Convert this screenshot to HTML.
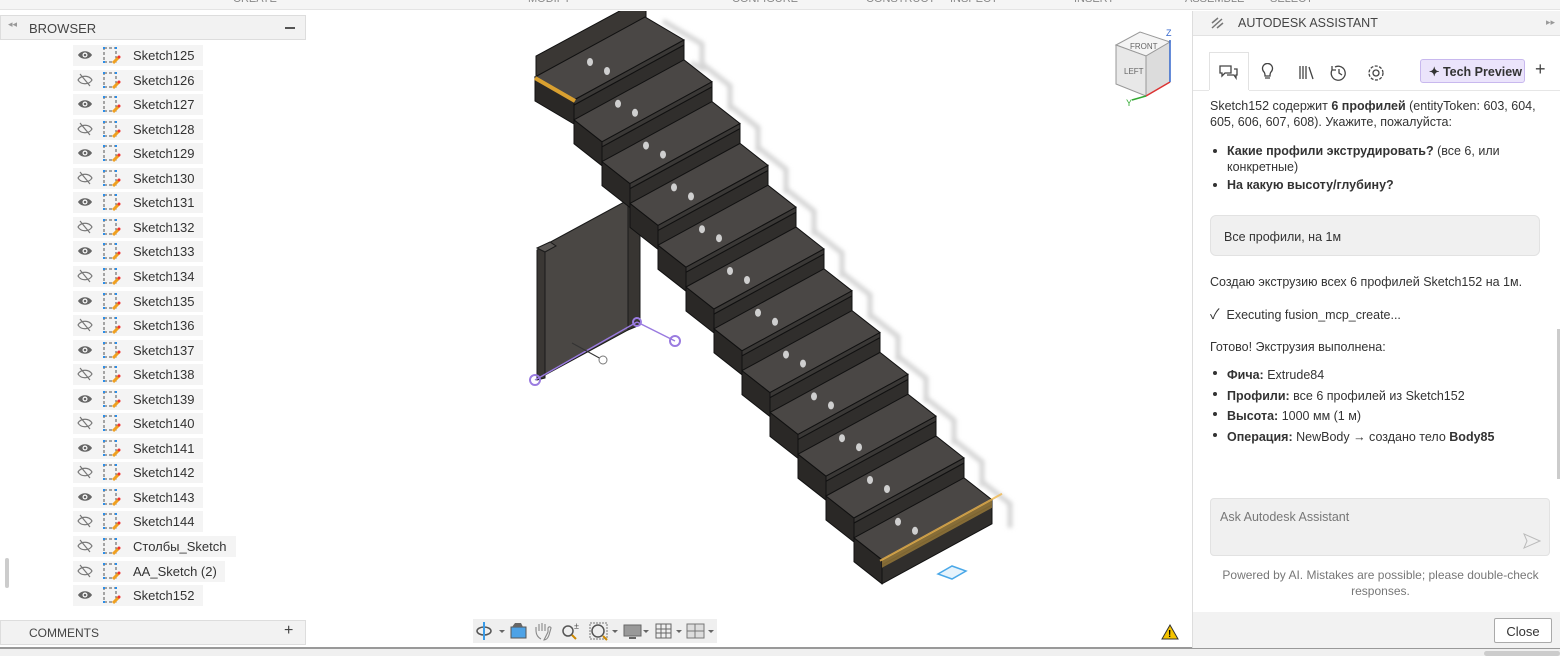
<!DOCTYPE html>
<html><head><meta charset="utf-8"><style>
*{box-sizing:border-box;margin:0;padding:0}
body{width:1560px;height:656px;overflow:hidden;background:#fff;font-family:"Liberation Sans","Noto Sans CJK SC",sans-serif;position:relative;color:#3c3c3c}
.abs{position:absolute}
.top{left:0;top:0;width:1560px;height:10px;background:#f5f5f5;border-bottom:1px solid #e4e4e4;overflow:hidden;font-size:11px;color:#888}
.top span{position:absolute;top:-7px}
.bh{left:0;top:15px;width:306px;height:25px;background:#f2f2f2;border:1px solid #ddd;font-size:13px;color:#444}
.row{position:absolute;left:73px;height:21px;background:#f4f4f4;font-size:13px;color:#333}
.row .t{position:absolute;left:60px;top:3px}
.panel{left:1192px;top:11px;width:368px;height:637px;border-left:1px solid #ddd;background:#fff}
.ph{left:0;top:0;width:368px;height:25px;background:#f3f3f3;border-bottom:1px solid #e2e2e2;font-size:12.5px;color:#444}
.msg{font-size:12.5px;line-height:16px;color:#333}
b{font-weight:bold}
ul{list-style:none}
ul li{position:relative;padding-left:17px}
ul li:before{content:"";position:absolute;left:3px;top:6px;width:4px;height:4px;border-radius:2px;background:#333}
</style></head><body>
<div class="abs top"><span style="left:233px">CREATE</span><span style="left:528px">MODIFY</span><span style="left:732px">CONFIGURE</span><span style="left:866px">CONSTRUCT</span><span style="left:950px">INSPECT</span><span style="left:1074px">INSERT</span><span style="left:1185px">ASSEMBLE</span><span style="left:1270px">SELECT</span></div>
<div class="abs bh"><span class="abs" style="left:7px;top:3px;font-size:9px;color:#999">◂◂</span><span class="abs" style="left:28px;top:5px">BROWSER</span><span class="abs" style="left:284px;top:11px;width:10px;height:2px;background:#555"></span></div>

<div id="rows"></div>

<div class="abs" style="left:0;top:620px;width:306px;height:25px;background:#f2f2f2;border:1px solid #ddd;font-size:12px;color:#444"><span class="abs" style="left:28px;top:5px">COMMENTS</span><span class="abs" style="left:283px;top:1px;font-size:16px">+</span></div>
<div class="abs" style="left:5px;top:558px;width:4px;height:30px;background:#ccc;border-radius:2px"></div>
<div class="abs" style="left:0;top:647px;width:1560px;height:9px;background:#f0f0f0;border-top:2px solid #999"></div>
<div class="abs" style="left:1484px;top:651px;width:76px;height:5px;background:#ccc;border-radius:3px"></div>

<svg class="abs" style="left:306px;top:11px" width="886" height="636" viewBox="306 11 886 636">
<defs><filter id="bl"><feGaussianBlur stdDeviation="2"/></filter></defs>
<g id="shadow" filter="url(#bl)"></g>
<polygon points="545,245 628,200 628,330 545,375" fill="#4a4744" stroke="#1a1a1a"/>
<polygon points="537,250 545,245 545,378 537,380" fill="#3a3734" stroke="#1a1a1a"/>
<polygon points="537,248 550,242 556,246 545,252" fill="#5a5754" stroke="#1a1a1a"/>
<polygon points="628,200 640,198 640,325 628,330" fill="#383532" stroke="#1a1a1a"/>
<g id="stairs"></g>
<line x1="535" y1="380" x2="637" y2="322" stroke="#9a7be0" stroke-width="1.5"/>
<line x1="637" y1="322" x2="675" y2="341" stroke="#9a7be0" stroke-width="1.5"/>
<circle cx="535" cy="380" r="5" fill="none" stroke="#9a7be0" stroke-width="2"/>
<circle cx="637" cy="322" r="4" fill="none" stroke="#9a7be0" stroke-width="2"/>
<circle cx="675" cy="341" r="5" fill="none" stroke="#9a7be0" stroke-width="2"/>
<line x1="572" y1="343" x2="603" y2="360" stroke="#333"/>
<circle cx="603" cy="360" r="4" fill="#fff" stroke="#777"/>
<polygon points="938,574 952,566 966,571 952,579" fill="#e6f3fc" stroke="#4aa8e8" stroke-width="1.5"/>
<polygon points="1116,45 1140,32 1170,42 1146,56" fill="#f4f4f4" stroke="#999"/>
<polygon points="1116,45 1146,56 1146,96 1116,84" fill="#e8e8e8" stroke="#999"/>
<polygon points="1146,56 1170,42 1170,82 1146,96" fill="#dcdcdc" stroke="#999"/>
<text x="1130" y="49" font-size="8" fill="#666" font-family="Liberation Sans">FRONT</text>
<text x="1124" y="74" font-size="8" fill="#666" font-family="Liberation Sans">LEFT</text>
<line x1="1146" y1="96" x2="1170" y2="82" stroke="#d33" stroke-width="1.5"/>
<line x1="1146" y1="96" x2="1132" y2="100" stroke="#3a3" stroke-width="1.5"/>
<line x1="1170" y1="40" x2="1170" y2="82" stroke="#36c" stroke-width="1.5"/>
<text x="1166" y="36" font-size="9" fill="#36c">Z</text><text x="1126" y="106" font-size="9" fill="#3a3">Y</text>
<polygon points="1170,625 1162,639 1178,639" fill="#f5c400" stroke="#333"/>
<text x="1168" y="637" font-size="10" font-weight="bold" fill="#000">!</text>
</svg>

<div class="abs" style="left:473px;top:619px;width:244px;height:24px;background:#efefef"></div>
<svg class="abs" style="left:473px;top:619px" width="244" height="24">
<ellipse cx="11" cy="12" rx="7" ry="4" fill="none" stroke="#555" stroke-width="1.5"/><line x1="11" y1="3" x2="11" y2="21" stroke="#3a9be8" stroke-width="2"/>
<path d="M26 11l3 3 3-3z" fill="#666"/>
<rect x="38" y="8" width="15" height="11" fill="#4da2e6" stroke="#555"/><path d="M39 8l3-4h6l2 4" fill="#666"/>
<path d="M68 20c-4-2-5-6-5-9v-3m3 4v-7m3 7v-8m3 8v-7m3 8v-4c1-2 3-1 3 0l-2 7c-1 3-3 5-5 5z" fill="none" stroke="#888" stroke-width="1.1"/>
<circle cx="95" cy="12" r="5" fill="none" stroke="#555" stroke-width="1.5"/><line x1="99" y1="16" x2="103" y2="20" stroke="#c80" stroke-width="2"/><text x="101" y="10" font-size="9" fill="#555">±</text>
<rect x="117" y="4" width="17" height="16" fill="none" stroke="#777" stroke-dasharray="2,1"/><circle cx="125" cy="12" r="6" fill="none" stroke="#555" stroke-width="1.5"/><line x1="130" y1="17" x2="134" y2="21" stroke="#c80" stroke-width="2"/>
<path d="M139 11l3 3 3-3z" fill="#666"/>
<rect x="151" y="6" width="17" height="11" fill="#999" stroke="#666"/><rect x="156" y="18" width="7" height="2" fill="#666"/><path d="M170 11l3 3 3-3z" fill="#666"/>
<g stroke="#666" fill="none"><rect x="183" y="5" width="15" height="14"/><path d="M188 5v14M193 5v14M183 10h15M183 14h15"/></g><path d="M203 11l3 3 3-3z" fill="#666"/>
<g stroke="#777" fill="#ddd"><rect x="214" y="5" width="17" height="14"/><path d="M222 5v14M214 12h17" fill="none"/></g><path d="M235 11l3 3 3-3z" fill="#666"/>
</svg>

<div class="abs panel">
 <div class="abs ph"><svg class="abs" style="left:18px;top:6px" width="18" height="12"><path d="M1 6L7 1M1 11L11 2M6 11L12 6" stroke="#777" stroke-width="1.5"/></svg><span class="abs" style="left:45px;top:5px">AUTODESK ASSISTANT</span><span class="abs" style="left:353px;top:6px;font-size:9px;color:#999">▸▸</span></div>
 <div class="abs" style="left:16px;top:41px;width:40px;height:38px;border:1px solid #e2e2e2;border-bottom:none;background:#fff"></div>
 <div class="abs" style="left:0;top:79px;width:368px;height:1px;background:#e6e6e6"></div>
 <div class="abs" style="left:16px;top:79px;width:40px;height:1px;background:#fff"></div>
 <svg class="abs" style="left:26px;top:52px" width="170" height="20" fill="none" stroke="#444" stroke-width="1.3">
  <path d="M1 3h11v7H6l-3 3v-3H1z"/><path d="M8 12h7l2 3v-3h1V6h-3"/>
  <path d="M45 9a5 5 0 1 1 7 0c-1 1-1 3-1 4h-5c0-1 0-3-1-4zM46 15h5"/>
  <path d="M81 3v13M84 3v13M87 3v13M90 4l4 12"/>
  <path d="M116 4a7 7 0 1 1-3 3M113 3v4h4M120 6v4l3 2"/>
  <circle cx="157" cy="10" r="3"/><circle cx="157" cy="10" r="7" stroke-dasharray="3,1.5"/>
 </svg>
 <div class="abs" style="left:227px;top:48px;width:105px;height:24px;background:#ebe4fb;border:1px solid #c8b8ee;border-radius:3px;font-size:12.5px;font-weight:bold;color:#333;padding:4px 0 0 8px">✦ Tech Preview</div>
 <span class="abs" style="left:342px;top:48px;font-size:18px;color:#444">+</span>
 <div class="abs msg" style="left:17px;top:87px;width:340px">Sketch152 содержит <b>6 профилей</b> (entityToken: 603, 604, 605, 606, 607, 608). Укажите, пожалуйста:
  <ul style="margin-top:13px"><li><b>Какие профили экструдировать?</b> (все 6, или конкретные)</li><li style="margin-top:2px"><b>На какую высоту/глубину?</b></li></ul></div>
 <div class="abs msg" style="left:17px;top:204px;width:330px;height:41px;background:#f0f0f0;border:1px solid #e2e2e2;border-radius:6px;padding:13px 0 0 13px">Все профили, на 1м</div>
 <div class="abs msg" style="left:17px;top:263px">Создаю экструзию всех 6 профилей Sketch152 на 1м.</div>
 <div class="abs msg" style="left:17px;top:295px"><span style="font-size:14px">✓</span>&nbsp; Executing fusion_mcp_create...</div>
 <div class="abs msg" style="left:17px;top:328px">Готово! Экструзия выполнена:
  <ul style="margin-top:10px;line-height:20.5px"><li><b>Фича:</b> Extrude84</li><li><b>Профили:</b> все 6 профилей из Sketch152</li><li><b>Высота:</b> 1000 мм (1 м)</li><li><b>Операция:</b> NewBody → создано тело <b>Body85</b></li></ul></div>
 <div class="abs" style="left:364px;top:318px;width:3px;height:150px;background:#ccc"></div>
 <div class="abs" style="left:17px;top:487px;width:340px;height:58px;background:#f0f0f0;border:1px solid #e2e2e2;border-radius:4px;font-size:12.5px;color:#777;padding:11px 0 0 9px">Ask Autodesk Assistant<svg class="abs" style="left:312px;top:34px" width="18" height="16"><path d="M1 1l16 7-16 7 3-7z" fill="none" stroke="#bbb"/></svg></div>
 <div class="abs" style="left:20px;top:556px;width:335px;text-align:center;font-size:12px;line-height:16px;color:#777">Powered by AI. Mistakes are possible; please double-check responses.</div>
 <div class="abs" style="left:0;top:601px;width:368px;height:36px;background:#f2f2f2"></div>
 <div class="abs" style="left:301px;top:607px;width:58px;height:25px;background:#fff;border:1px solid #aaa;border-radius:2px;font-size:13px;color:#333;text-align:center;padding-top:5px">Close</div>
</div>

<script>
var names=[];for(var i=125;i<=144;i++)names.push("Sketch"+i);names.push("Столбы_Sketch","AA_Sketch (2)","Sketch152");
var w=[130,130,130,130,130,130,130,130,130,130,130,130,130,130,130,130,130,130,130,130,163,152,130];
var h="";names.forEach(function(n,i){var y=45+i*24.55;var open=(i%2==0&&i<20)||i==22;
var eye=open?'<path d="M1 7c3-5 11-5 14 0-3 5-11 5-14 0z" fill="#666"/><circle cx="8" cy="7" r="2.5" fill="#fff"/><circle cx="8" cy="7" r="1.3" fill="#666"/>':'<path d="M1 7c3-5 11-5 14 0-3 5-11 5-14 0z" fill="none" stroke="#777" stroke-width="1.2"/><line x1="3" y1="1" x2="13" y2="13" stroke="#777" stroke-width="1.2"/>';
h+='<div class="row" style="top:'+y+'px;width:'+w[i]+'px"><svg class="abs" style="left:4px;top:3px" width="16" height="14">'+eye+'</svg><svg class="abs" style="left:29px;top:1px" width="20" height="20"><rect x="2" y="2" width="12" height="14" fill="none" stroke="#555" stroke-dasharray="3,2"/><rect x="1" y="1" width="2" height="2" fill="#2a8de8"/><rect x="13" y="1" width="2" height="2" fill="#2a8de8"/><rect x="1" y="15" width="2" height="2" fill="#2a8de8"/><line x1="11" y1="17" x2="17" y2="11" stroke="#f0a020" stroke-width="3"/><circle cx="17" cy="11" r="1.5" fill="#e33"/></svg><span class="t">'+n+'</span></div>';});
document.getElementById("rows").innerHTML=h;
var DX=28,DY=41.8,N=12,W=[110,-60];
function pt(b,a){return (b[0]+a[0]).toFixed(1)+","+(b[1]+a[1]).toFixed(1)}
var s='<polygon points="536,78 536,56 640,0 646,0 646,22" fill="#3a3734" stroke="#111"/>',sh="";
for(var k=0;k<N;k++){var D=k==0?[-39,-23]:[-28,-22];var F=[574+DX*k,100+DY*k];
 var FR=[F[0]+W[0],F[1]+W[1]],BL=[F[0]+D[0],F[1]+D[1]],BR=[FR[0]+D[0],FR[1]+D[1]];
 function P(arr){return arr.map(function(q){return pt(q[0],q[1])}).join(" ")}
 sh+='<polyline points="'+P([[BR,[18,4]],[FR,[18,4]],[FR,[18,28]],[BR,[46,46]]])+'" fill="none" stroke="#d4d4d4" stroke-width="5"/>';
 s+='<polygon points="'+P([[BL,[0,0]],[F,[0,0]],[F,[0,24]],[BL,[0,24]]])+'" fill="#2a2826" stroke="#111"/>';
 s+='<polygon points="'+P([[F,[0,5]],[FR,[0,5]],[FR,[0,24]],[F,[0,24]]])+'" fill="#302e2c" stroke="#111"/>';
 s+='<polygon points="'+P([[BL,[0,0]],[BR,[0,0]],[FR,[0,0]],[F,[0,0]]])+'" fill="#4a4745" stroke="#111"/>';
 s+='<polygon points="'+P([[F,[0,0]],[FR,[0,0]],[FR,[0,5]],[F,[0,5]]])+'" fill="#3a3836" stroke="#111"/>';
 s+='<ellipse cx="'+(F[0]+16)+'" cy="'+(F[1]-38)+'" rx="3" ry="4" fill="#cfcfcf"/><ellipse cx="'+(F[0]+33)+'" cy="'+(F[1]-29)+'" rx="3" ry="4" fill="#cfcfcf"/>';}
var L=[574+DX*(N-1),100+DY*(N-1)];
s+='<line x1="535" y1="78" x2="575" y2="101" stroke="#d9a030" stroke-width="4"/>';
s+='<polygon points="'+pt(L,[0,0])+' '+pt(L,[110,-60])+' '+pt(L,[110,-52])+' '+pt(L,[0,8])+'" fill="#9a7a3a" opacity="0.8"/>';
s+='<line x1="'+(L[0]-2)+'" y1="'+(L[1]+1)+'" x2="'+(L[0]+120)+'" y2="'+(L[1]-66)+'" stroke="#f0b850" stroke-width="2" opacity="0.8"/>';
document.getElementById("shadow").innerHTML=sh;
document.getElementById("stairs").innerHTML=s;
</script>
</body></html>
